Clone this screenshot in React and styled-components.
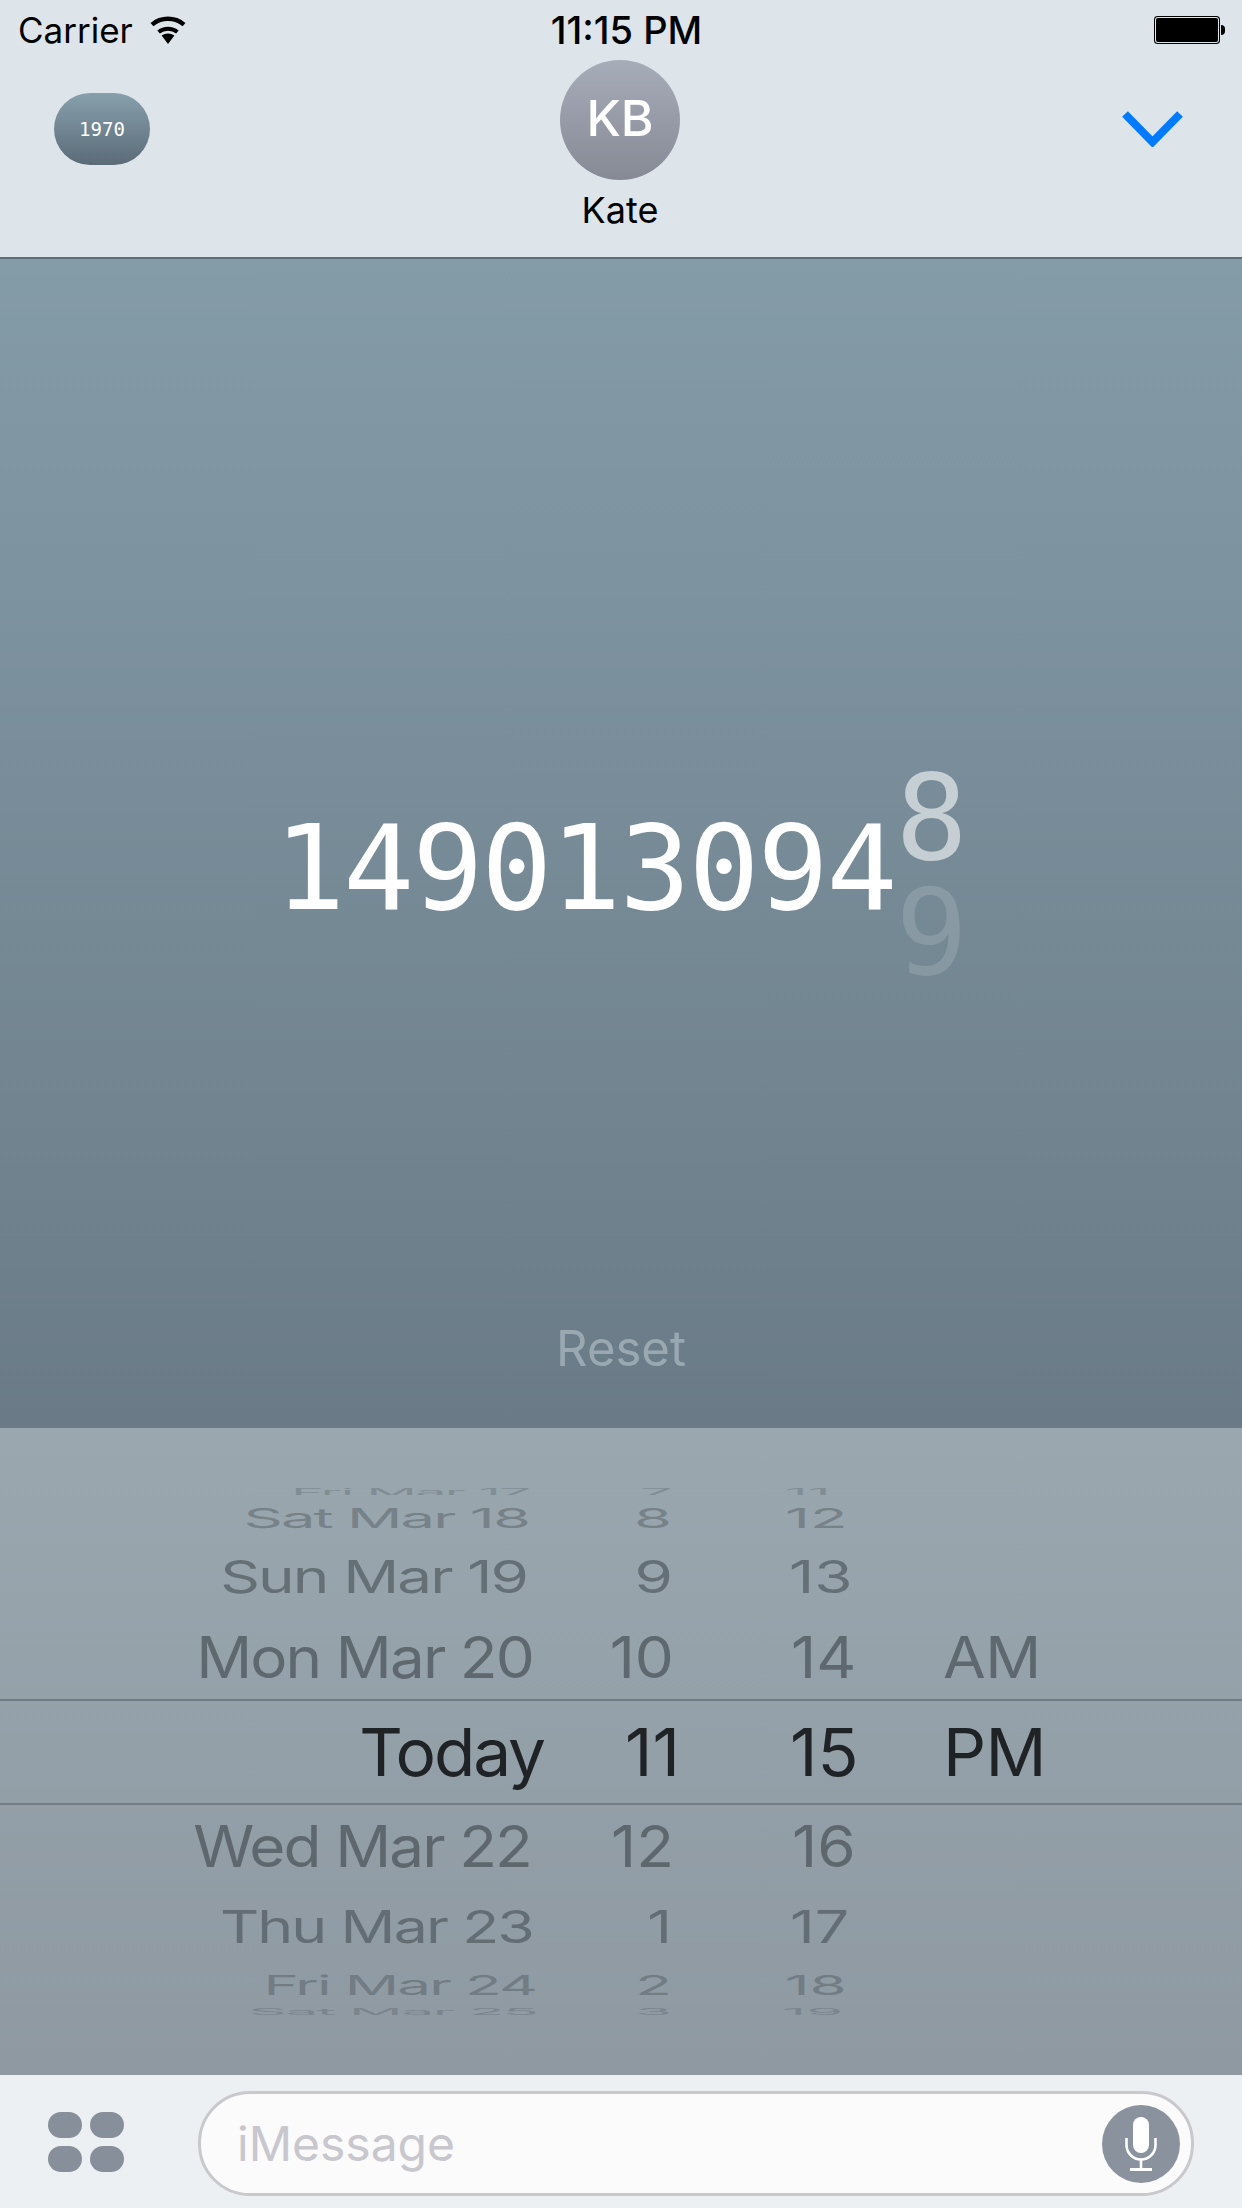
import styled, { createGlobalStyle } from "styled-components";

const GlobalStyle = createGlobalStyle`
  html, body {
    margin: 0;
    padding: 0;
    background: #8e99a2;
  }
  * {
    box-sizing: border-box;
  }
`;

const SANS = `Inter, "Liberation Sans", sans-serif`;
const MONO = `"DejaVu Sans Mono", "Liberation Mono", monospace`;

const WHEEL = [
  { date: "Fri Mar 17", hour: "7", min: "11", h: 9, dateEnd: 529, hourEnd: 672, minStart: 785, sx: 0.9, sy: 0.16, fade: 0.35 },
  { date: "Sat Mar 18", hour: "8", min: "12", h: 43, dateEnd: 529, hourEnd: 672, minStart: 785, sx: 0.99, sy: 0.44, fade: 0.5 },
  { date: "Sun Mar 19", hour: "9", min: "13", h: 76, dateEnd: 527, hourEnd: 673, minStart: 789, sx: 1, sy: 0.72, fade: 0.75 },
  { date: "Mon Mar 20", hour: "10", min: "14", ap: "AM", h: 85, dateEnd: 533, hourEnd: 674, minStart: 791, sx: 1, sy: 0.92, fade: 0.85 },
  { date: "Today", hour: "11", min: "15", ap: "PM", h: 106, dateEnd: 544, hourEnd: 680, minStart: 790, sx: 1.09, sy: 1.06, selected: true },
  { date: "Wed Mar 22", hour: "12", min: "16", h: 81, dateEnd: 531, hourEnd: 674, minStart: 792, sx: 1, sy: 0.92, fade: 0.85 },
  { date: "Thu Mar 23", hour: "1", min: "17", h: 80, dateEnd: 533, hourEnd: 672, minStart: 790, sx: 0.98, sy: 0.72, fade: 0.75 },
  { date: "Fri Mar 24", hour: "2", min: "18", h: 36, dateEnd: 536, hourEnd: 672, minStart: 785, sx: 0.97, sy: 0.44, fade: 0.5 },
  { date: "Sat Mar 25", hour: "3", min: "19", h: 18, dateEnd: 537, hourEnd: 672, minStart: 782, sx: 0.96, sy: 0.14, fade: 0.35 },
];

const WifiIcon = () => (
  <svg width="38" height="28" viewBox="0 0 38 28">
    <path d="M19 28 L12.6 19.6 A10.4 10.4 0 0 1 25.4 19.6 Z" fill="#000" />
    <path d="M9.6 16 A15 15 0 0 1 28.4 16" fill="none" stroke="#000" strokeWidth="4" />
    <path d="M3 8.6 A25 25 0 0 1 35 8.6" fill="none" stroke="#000" strokeWidth="4.4" />
  </svg>
);

const Chevron = () => (
  <svg width="61" height="36" viewBox="0 0 61 36">
    <polyline points="3,3 30.5,31 58,3" fill="none" stroke="#007aff" strokeWidth="8" />
  </svg>
);

const MicIcon = () => (
  <svg width="34" height="56" viewBox="0 0 34 56">
    <rect x="9" y="1" width="16" height="36" rx="8" fill="#fff" />
    <path d="M2.5 22 V29 A14.5 14.5 0 0 0 31.5 29 V22" fill="none" stroke="#fff" strokeWidth="2.6" />
    <rect x="15.7" y="43" width="2.6" height="10" fill="#fff" />
    <rect x="6" y="52" width="22" height="3" fill="#fff" />
  </svg>
);

const App = () => {
  return (
    <Screen>
      <GlobalStyle />
      <Header>
        <StatusBar>
          <StatusLeft>
            <StatusText>Carrier</StatusText>
            <WifiIcon />
          </StatusLeft>
          <Clock>11:15 PM</Clock>
          <Battery>
            <BatteryFill />
            <BatteryNub />
          </Battery>
        </StatusBar>
        <NavRow>
          <YearPill>1970</YearPill>
          <Contact>
            <Avatar>KB</Avatar>
            <ContactName>Kate</ContactName>
          </Contact>
          <CollapseButton>
            <Chevron />
          </CollapseButton>
        </NavRow>
      </Header>

      <Stage>
        <NumberRow>
          <Digits>149013094</Digits>
          <Roller>
            <RollDigit $alpha={0.58}>8</RollDigit>
            <RollDigit $alpha={0.14}>9</RollDigit>
          </Roller>
        </NumberRow>
        <ResetLabel>Reset</ResetLabel>
      </Stage>

      <Picker>
        {WHEEL.map((row) => (
          <WheelRow
            key={row.date}
            $h={row.h}
            $selected={row.selected}
            $cols={`${row.dateEnd}px ${row.hourEnd - row.dateEnd}px ${943 - row.hourEnd}px 1fr`}
          >
            <DateCell $sx={row.sx} $sy={row.sy} $fade={row.fade} $selected={row.selected}>
              {row.date}
            </DateCell>
            <HourCell $sx={row.sx} $sy={row.sy} $fade={row.fade} $selected={row.selected}>
              {row.hour}
            </HourCell>
            <MinuteCell $pad={row.minStart - row.hourEnd}>
              <MinuteText $sx={row.sx} $sy={row.sy} $fade={row.fade} $selected={row.selected}>
                {row.min}
              </MinuteText>
            </MinuteCell>
            <PeriodCell $sx={row.sx} $sy={row.sy} $fade={row.fade} $selected={row.selected}>
              {row.ap}
            </PeriodCell>
          </WheelRow>
        ))}
      </Picker>

      <Toolbar>
        <AppsGrid>
          <AppDot />
          <AppDot />
          <AppDot />
          <AppDot />
        </AppsGrid>
        <MessageField>
          <Placeholder>iMessage</Placeholder>
          <MicButton>
            <MicIcon />
          </MicButton>
        </MessageField>
      </Toolbar>
    </Screen>
  );
};

const Screen = styled.div`
  width: 1242px;
  height: 2208px;
  display: flex;
  flex-direction: column;
  overflow: hidden;
  font-family: ${SANS};
`;

const Header = styled.header`
  height: 259px;
  flex: none;
  background: #dde5ea;
  border-bottom: 2px solid #5e6e78;
  display: flex;
  flex-direction: column;
`;
const StatusBar = styled.div`
  height: 60px;
  flex: none;
  padding: 0 17px 0 18px;
  display: grid;
  grid-template-columns: 1fr auto 1fr;
  align-items: center;
`;
const StatusLeft = styled.div`
  display: flex;
  align-items: center;
  gap: 16px;
`;
const StatusText = styled.span`
  font-size: 35px;
  color: #000;
`;
const Clock = styled.span`
  font-size: 38px;
  font-weight: 500;
  color: #000;
  margin-left: 10px;
`;
const Battery = styled.div`
  justify-self: end;
  display: flex;
  align-items: center;
`;
const BatteryFill = styled.div`
  width: 66px;
  height: 28px;
  border-radius: 4px;
  background: #000;
  box-shadow: inset 0 0 0 1px #000, inset 0 0 0 2px #dde5ea;
`;
const BatteryNub = styled.div`
  width: 4px;
  height: 10px;
  margin-left: 1px;
  border-radius: 0 4px 4px 0;
  background: #000;
`;
const NavRow = styled.div`
  flex: 1;
  display: grid;
  grid-template-columns: 1fr auto 1fr;
  align-items: start;
  padding: 0 59px 0 54px;
`;
const YearPill = styled.div`
  width: 96px;
  height: 72px;
  margin-top: 33px;
  border-radius: 36px;
  background: linear-gradient(#87a0ac, #5b6b78);
  color: #fff;
  font-family: ${MONO};
  font-size: 19px;
  display: flex;
  align-items: center;
  justify-content: center;
`;
const Contact = styled.div`
  display: flex;
  flex-direction: column;
  align-items: center;
  margin-left: 3px;
`;
const Avatar = styled.div`
  width: 120px;
  height: 120px;
  padding-bottom: 4px;
  border-radius: 50%;
  background: linear-gradient(#a7acb9, #868a95);
  color: #fff;
  font-size: 50px;
  font-weight: 500;
  display: flex;
  align-items: center;
  justify-content: center;
`;
const ContactName = styled.div`
  font-size: 36px;
  color: #000;
  margin-top: 8px;
`;
const CollapseButton = styled.div`
  justify-self: end;
  margin-top: 51px;
  display: flex;
`;

const Stage = styled.main`
  height: 1169px;
  flex: none;
  background: linear-gradient(#849ca8, #6a7b87);
  display: flex;
  flex-direction: column;
  align-items: center;
  padding-top: 487px;
`;
const NumberRow = styled.div`
  display: flex;
  align-items: center;
  color: #fff;
  font-family: ${MONO};
`;
const Digits = styled.span`
  font-size: 118px;
  letter-spacing: -2px;
  line-height: 140px;
`;
const Roller = styled.div`
  display: flex;
  flex-direction: column;
  margin-top: 14px;
`;
const RollDigit = styled.span`
  font-size: 120px;
  line-height: 115px;
  color: rgba(255, 255, 255, ${(p) => p.$alpha});
`;
const ResetLabel = styled.div`
  margin-top: auto;
  margin-bottom: 50px;
  font-size: 49px;
  color: #9aa8b2;
`;

const Picker = styled.section`
  height: 647px;
  flex: none;
  padding-top: 58px;
  background: linear-gradient(#9aa7af, #8e99a2);
  display: flex;
  flex-direction: column;
`;
const WheelRow = styled.div`
  height: ${(p) => p.$h}px;
  flex: none;
  display: grid;
  grid-template-columns: ${(p) => p.$cols};
  grid-template-rows: minmax(0, 1fr);
  align-items: center;
  padding-top: 2px;
  overflow: ${(p) => (p.$selected ? "visible" : "hidden")};
  ${(p) =>
    p.$selected &&
    `
    border-top: 2px solid #727d87;
    border-bottom: 2px solid #727d87;
  `}
`;
const wheelText = (p) => `
  font-size: 62px;
  line-height: 76px;
  white-space: nowrap;
  color: ${p.$selected ? "#202326" : "#555e65"};
  opacity: ${p.$fade ?? 1};
  transform: scale(${p.$sx}, ${p.$sy});
`;
const DateCell = styled.div`
  ${wheelText}
  text-align: right;
  transform-origin: right center;
  letter-spacing: -1.9px;
`;
const HourCell = styled.div`
  ${wheelText}
  text-align: right;
  transform-origin: right center;
`;
const MinuteCell = styled.div`
  padding-left: ${(p) => p.$pad}px;
`;
const MinuteText = styled.div`
  ${wheelText}
  transform-origin: left center;
`;
const PeriodCell = styled.div`
  ${wheelText}
  transform-origin: left center;
  letter-spacing: -0.5px;
`;

const Toolbar = styled.footer`
  flex: 1;
  background: #ecf0f3;
  display: flex;
  align-items: center;
  padding: 16px 48px 12px 48px;
`;
const AppsGrid = styled.div`
  display: grid;
  grid-template-columns: 34px 34px;
  grid-auto-rows: 26px;
  gap: 8px;
  margin: -3px 74px 0 0;
`;
const AppDot = styled.div`
  border-radius: 13px;
  background: #878f9b;
`;
const MessageField = styled.div`
  flex: 1;
  height: 105px;
  border: 3px solid #c8c8cd;
  border-radius: 52px;
  background: #fbfbfb;
  display: flex;
  align-items: center;
  justify-content: space-between;
  padding: 0 11px 0 36px;
`;
const Placeholder = styled.span`
  font-size: 48px;
  color: #c7c7cd;
`;
const MicButton = styled.div`
  width: 78px;
  height: 78px;
  border-radius: 50%;
  background: #8a929e;
  display: flex;
  align-items: center;
  justify-content: center;
`;

export default App;
